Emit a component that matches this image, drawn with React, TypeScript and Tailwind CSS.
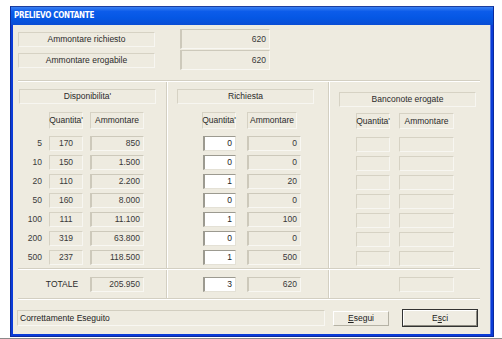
import React from "react";

const font = { fontFamily: '"Liberation Sans", Arial, sans-serif' };

function Label({ w, children, className = "" }: { w: string; children?: React.ReactNode; className?: string }) {
  return (
    <div
      className={`${w} h-[15px] flex items-center justify-center border-t border-l border-[#D6D2C4] border-r border-b border-r-[#F7F6F1] border-b-[#F7F6F1] text-[#2a2a2a] ${className}`}
    >
      {children}
    </div>
  );
}

function Val({ w, h = "h-[15px]", children, className = "" }: { w: string; h?: string; children?: React.ReactNode; className?: string }) {
  return (
    <div
      className={`${w} ${h} flex items-center justify-end pr-[3px] border-t border-l-2 border-[#CDC9BB] border-r border-b border-r-[#F8F7F2] border-b-[#F8F7F2] text-[#383838] ${className}`}
    >
      {children}
    </div>
  );
}

function Input({ w, children, className = "" }: { w: string; children?: React.ReactNode; className?: string }) {
  return (
    <div
      className={`${w} h-[15px] flex items-center justify-end pr-[3px] bg-white border-t border-l-2 border-[#9C9A90] border-r border-b border-r-[#E4E1D6] border-b-[#E4E1D6] text-[#222] ${className}`}
    >
      {children}
    </div>
  );
}

function HLine({ className = "" }: { className?: string }) {
  return <div className={`h-[2px] border-t border-[#D3CFC2] border-b border-b-white ${className}`} />;
}

function VLine() {
  return <div className="w-[2px] self-stretch border-l border-[#D3CFC2] border-r border-r-white" />;
}

const rows = [
  { d: "5", q: "170", a: "850", rq: "0", ra: "0" },
  { d: "10", q: "150", a: "1.500", rq: "0", ra: "0" },
  { d: "20", q: "110", a: "2.200", rq: "1", ra: "20" },
  { d: "50", q: "160", a: "8.000", rq: "0", ra: "0" },
  { d: "100", q: "111", a: "11.100", rq: "1", ra: "100" },
  { d: "200", q: "319", a: "63.800", rq: "0", ra: "0" },
  { d: "500", q: "237", a: "118.500", rq: "1", ra: "500" },
];

export default function App() {
  return (
    <div className="w-[502px] h-[339px] bg-white overflow-hidden text-[8.5px] leading-none flex flex-col" style={font}>
      <div className="ml-[10px] mt-[6px] w-[484px] h-[331px] flex flex-col bg-[#0A3BD8] border border-[#0A2A9C] border-t-[#1C3E9E]">
        {/* title bar */}
        <div className="h-[18px] flex items-center pl-[3px] bg-[linear-gradient(to_bottom,#3A80F2_0%,#0C5CEA_25%,#0557E4_60%,#0A4DD4_100%)]">
          <span
            className="text-white font-bold text-[8px] tracking-[-0.3px]"
            style={{ fontFamily: '"DejaVu Sans Condensed", "Liberation Sans Narrow", "Liberation Sans", sans-serif' }}
          >
            PRELIEVO CONTANTE
          </span>
        </div>
        {/* body */}
        <div className="flex-1 mx-[2px] mb-[2px] bg-[#EEEBE0] border-r border-[#5C7EE0] flex flex-col">
          {/* top section */}
          <div className="pt-[4px] pl-[5px] flex flex-col gap-[1px]">
            <div className="h-[20px] flex items-center">
              <Label w="w-[137px]">Ammontare richiesto</Label>
              <Val w="w-[90px]" h="h-[20px]" className="ml-[25px]">620</Val>
            </div>
            <div className="h-[20px] flex items-center">
              <Label w="w-[137px]">Ammontare erogabile</Label>
              <Val w="w-[90px]" h="h-[20px]" className="ml-[25px]">620</Val>
            </div>
          </div>
          <HLine className="mt-[10px] ml-[5px] w-[462px]" />

          {/* panels */}
          <div className="flex h-[186px]">
            {/* left */}
            <div className="w-[153px] flex flex-col">
              <Label w="w-[137px]" className="ml-[6px] mt-[7px]">Disponibilita'</Label>
              <div className="flex mt-[8px] h-[17px]">
                <Label w="w-[34px]" className="ml-[36px] h-[17px]">Quantita'</Label>
                <Label w="w-[54px]" className="ml-[7px] h-[17px]">Ammontare</Label>
              </div>
              <div className="flex flex-col gap-[4px] mt-[7px]">
                {rows.map((r) => (
                  <div key={r.d} className="flex h-[15px] items-center">
                    <div className="w-[29px] text-right text-[#3a3a3a]">{r.d}</div>
                    <Label w="w-[34px]" className="ml-[7px] text-[#3a3a3a]">{r.q}</Label>
                    <Val w="w-[54px]" className="ml-[7px]">{r.a}</Val>
                  </div>
                ))}
              </div>
            </div>
            <VLine />
            {/* middle */}
            <div className="w-[160px] flex flex-col">
              <Label w="w-[137px]" className="ml-[9px] mt-[7px]">Richiesta</Label>
              <div className="flex mt-[8px] h-[17px]">
                <Label w="w-[34px]" className="ml-[34px] h-[17px]">Quantita'</Label>
                <Label w="w-[50px]" className="ml-[11px] h-[17px]">Ammontare</Label>
              </div>
              <div className="flex flex-col gap-[4px] mt-[7px]">
                {rows.map((r) => (
                  <div key={r.d} className="flex h-[15px] items-center">
                    <Input w="w-[33px]" className="ml-[35px]">{r.rq}</Input>
                    <Val w="w-[54px]" className="ml-[11px]">{r.ra}</Val>
                  </div>
                ))}
              </div>
            </div>
            <VLine />
            {/* right */}
            <div className="w-[160px] flex flex-col">
              <Label w="w-[137px]" className="ml-[9px] mt-[10px]">Banconote erogate</Label>
              <div className="flex mt-[6px] h-[16px]">
                <Label w="w-[34px]" className="ml-[26px] h-[16px]">Quantita'</Label>
                <Label w="w-[55px]" className="ml-[9px] h-[16px]">Ammontare</Label>
              </div>
              <div className="flex flex-col gap-[4px] mt-[8px]">
                {rows.map((r) => (
                  <div key={r.d} className="flex h-[15px] items-center">
                    <Label w="w-[34px]" className="ml-[26px]" />
                    <Label w="w-[55px]" className="ml-[9px]" />
                  </div>
                ))}
              </div>
            </div>
          </div>
          <HLine className="ml-[5px] w-[462px]" />

          {/* totals */}
          <div className="flex h-[28px]">
            <div className="w-[153px] flex items-center">
              <div className="w-[36px] ml-[31px] text-[#2a2a2a] text-center">TOTALE</div>
              <Val w="w-[54px]" className="ml-[10px]">205.950</Val>
            </div>
            <VLine />
            <div className="w-[160px] flex items-center">
              <Input w="w-[33px]" className="ml-[35px]">3</Input>
              <Val w="w-[54px]" className="ml-[11px]">620</Val>
            </div>
            <VLine />
            <div className="w-[160px] flex items-center">
              <Label w="w-[55px]" className="ml-[69px]" />
            </div>
          </div>
          <HLine className="ml-[5px] w-[462px]" />

          {/* status + buttons */}
          <div className="flex items-center mt-[9px]">
            <div className="ml-[4px] w-[308px] h-[16px] flex items-center pl-[2px] border-t border-l border-[#D2CEC0] border-r border-b border-r-[#F8F7F2] border-b-[#F8F7F2] text-[#222]">
              Correttamente Eseguito
            </div>
            <div className="ml-[8px] w-[56px] h-[15px] flex items-center justify-center border border-t-white border-l-white border-r-[#B5B2A5] border-b-[#B5B2A5] bg-[#EFECE2] text-[#222]">
              <span>
                <span className="underline">E</span>segui
              </span>
            </div>
            <div className="ml-[13px] w-[76px] h-[18px] border border-[#333] flex">
              <div className="flex-1 flex items-center justify-center border border-t-white border-l-white border-r-[#8C8A80] border-b-[#8C8A80] bg-[#EFECE2] text-[#222]">
                <span>
                  E<span className="underline">s</span>ci
                </span>
              </div>
            </div>
          </div>
        </div>
      </div>
      <div className="h-[1px] mt-[1px] bg-[#8A8A8A] w-full" />
    </div>
  );
}
